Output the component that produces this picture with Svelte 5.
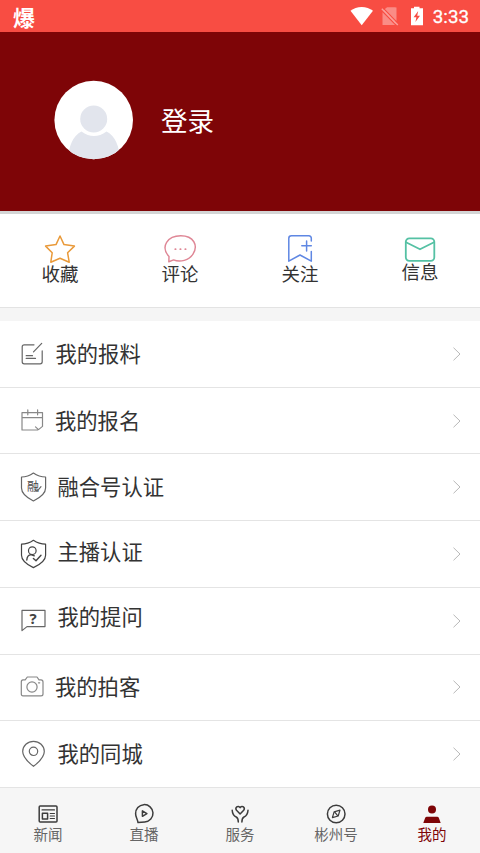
<script>
  const actions = [
    { id: 'fav', label: '收藏', color: '#e99a3a' },
    { id: 'comment', label: '评论', color: '#df8796' },
    { id: 'follow', label: '关注', color: '#5f87e3' },
    { id: 'message', label: '信息', color: '#55c1a4' }
  ];
  const rows = [
    { id: 'report', label: '我的报料', tone: 'narrow' },
    { id: 'signup', label: '我的报名', tone: 'narrower' },
    { id: 'fusion', label: '融合号认证', tone: 'wide' },
    { id: 'anchor', label: '主播认证', tone: 'wide raised' },
    { id: 'question', label: '我的提问', tone: 'wide lifted' },
    { id: 'photo', label: '我的拍客', tone: 'narrower' },
    { id: 'city', label: '我的同城', tone: 'wide' }
  ];
  const tabs = [
    { id: 'news', label: '新闻' },
    { id: 'live', label: '直播' },
    { id: 'service', label: '服务' },
    { id: 'binzhou', label: '彬州号' },
    { id: 'me', label: '我的', active: true }
  ];
</script>

<div class="screen">
  <div class="status">
    <span class="badge">爆</span>
    <div class="signals">
      <svg width="24" height="20" viewBox="0 0 24 20"><path d="M0.5 4.8Q5.2 1 11.7 1T23 4.8L11.7 19.3Z" fill="#fff" /></svg>
      <svg class="sim" width="18" height="20" viewBox="0 0 18 20">
        <path d="M6 1.5H15.5V15L3.2 3.9ZM1.5 6.2L14 19H1.5Z" fill="#fa8c86" />
        <path d="M2 4.5L14.5 18V1.5H6Z" fill="#fa8c86" />
        <path d="M2 1.8L17.2 17.6" stroke="#f84d43" stroke-width="1.2" />
        <path d="M0.8 2.8L16.8 19" stroke="#fba09b" stroke-width="1.4" />
      </svg>
      <svg class="battery" width="14" height="20" viewBox="0 0 14 20">
        <path d="M4 0.7H9.5V2.3H13V19.3H1V2.3H4Z" fill="#fff" />
        <path d="M8.2 5L3.6 11.3H6.4L5.4 16L10 9.7H7.2Z" fill="#f84d43" />
      </svg>
      <span class="clock">3:33</span>
    </div>
  </div>

  <header>
    <svg class="avatar" width="80" height="80" viewBox="0 0 80 80">
      <defs><clipPath id="face"><circle cx="39.7" cy="40" r="39.3" /></clipPath></defs>
      <circle cx="39.7" cy="40" r="39.3" fill="#fff" />
      <g clip-path="url(#face)" fill="#e2e5ed">
        <path d="M14 80Q15 58 27.5 51.5Q40 60.5 52.5 51.5Q65 58 66 80Z" />
        <circle cx="39.7" cy="39" r="13.5" />
      </g>
    </svg>
    <span>登录</span>
  </header>

  <nav class="actions">
    {#each actions as a}
      <div class="action" class:up={a.id === 'message'}>
        <svg width="36" height="30" viewBox="0 0 36 30" fill="none" stroke={a.color} stroke-width="1.5" stroke-linejoin="round" stroke-linecap="round">
          {#if a.id === 'fav'}
            <path d="M18 2L22 10.6L32.4 12.1L25.6 18.8L27.2 28.2L18 24.3L8.8 28.2L10.2 18.8L3.6 12.1L14 10.6Z" />
          {:else if a.id === 'comment'}
            <path d="M6.4 22.6C-3 12.5 5 1.8 18.7 1.8S37.2 11.5 31.5 20.2C27.5 26.2 18 28.7 11.2 25.9L6.2 27.8Z" transform="translate(.9 0) scale(.955 1)" />
            <path d="M13.3 15.2H13.6M18.3 15.2H18.6M23.3 15.2H23.6" stroke-width="1.8" />
          {:else if a.id === 'follow'}
            <path d="M29.3 7V4.3Q29.3 1.8 26.8 1.8H9.5Q6.8 1.8 6.8 4.3V27.2L18 21L29.3 27.2V17.5M19.8 11.8H29.3M24.6 7V17" />
          {:else}
            <g stroke-width="1.8"><rect x="3.8" y="4.3" width="28.5" height="22.5" rx="3.5" /><path d="M4 8.3L18 15.3L32 8.3" /></g>
          {/if}
        </svg>
        <span>{a.label}</span>
      </div>
    {/each}
  </nav>

  <main>
    {#each rows as r}
      <div class="row {r.tone}">
        <svg class="icon" width="28" height="32" viewBox="0 0 28 32" fill="none" stroke="#666" stroke-width="1.2" stroke-linejoin="round" stroke-linecap="round">
          {#if r.id === 'report'}
            <path d="M14 6.8H4.2Q2.2 6.8 2.2 8.8V23.8Q2.2 25.8 4.2 25.8H20.2Q22.2 25.8 22.2 23.8V12.9M13.5 13.9L21.7 5.4M6.2 17.7H12.5M6.2 20.4H15.5" />
          {:else if r.id === 'signup'}
            <path d="M17.5 25H2V7.6H22.5V21.4L18.5 24.6L15.5 21.9M2 12.6H22.5M7.8 4.9V9.8M17.6 4.9V9.8" stroke="#888" />
          {:else if r.id === 'fusion'}
            <path d="M13.4 2Q8 6 1.5 6V17Q1.5 24 13.4 30Q25.6 24 25.6 17V6Q19 6 13.4 2Z" />
            <text x="7" y="19.5" font-size="12" fill="#444" stroke="none">融</text>
            <path d="M14.8 18L17 20.3L21 15.6" />
          {:else if r.id === 'anchor'}
            <g stroke="#444"><path d="M13.4 2.3Q8 6.2 1.5 6.2V17.2Q1.5 24 13.4 29.6Q25.6 24 25.6 17.2V6.2Q19 6.2 13.4 2.3Z" />
              <circle cx="12.3" cy="12.7" r="3.8" /><path d="M6.8 22Q7.2 17 11 16.6L14.3 17.8M13.4 20.5L16 22.8L21 17.3" stroke-width="1.4" /></g>
          {:else if r.id === 'question'}
            <path d="M2 5.4H25V21.6H7L2 25.6Z" /><text class="q" x="9.4" y="18.7">?</text>
          {:else if r.id === 'photo'}
            <g stroke="#888"><path d="M3 8.9H5.2L7.3 6H17L19 8.9H21Q23 8.9 23 11V23Q23 24.9 21 24.9H3Q1.3 24.9 1.3 23V11Q1.3 8.9 3 8.9Z" /><circle cx="12" cy="16" r="5.1" /><path d="M18.5 11.8H19.7" /></g>
          {:else}
            <path d="M13.5 28.3Q2.7 20 2.7 13.5A10.8 10.2 0 0 1 24.3 13.5Q24.3 20 13.5 28.3Z" /><circle cx="13.5" cy="13.3" r="4.2" />
          {/if}
        </svg>
        <span>{r.label}</span>
        <svg class="chevron" width="10" height="16" viewBox="0 0 10 16" fill="none" stroke="#b9b9b9" stroke-width="1"><path d="M1.5 1.7L8 8L1.5 14.3" /></svg>
      </div>
    {/each}
  </main>

  <footer>
    {#each tabs as t}
      <div class="tab" class:active={t.active}>
        <svg width="24" height="22" viewBox="0 0 24 22" fill="none" stroke="#3c3c3c" stroke-width="1.5" stroke-linejoin="round" stroke-linecap="round">
          {#if t.id === 'news'}
            <rect x="3.2" y="3" width="17.8" height="16" rx="1" /><path d="M6 6.9H18.5M14.2 10.5H18.5M14.2 13H18.5M14.2 15.5H18.5" stroke-width="1.1" /><rect x="6.4" y="10.3" width="5.2" height="5.6" />
          {:else if t.id === 'live'}
            <path d="M6 19.5C5.2 15.2 3.6 13.9 3.6 10.8A8.7 8.7 0 1 1 12.8 19Z" /><path d="M10.4 7.9V13.3L14.9 10.6Z" />
          {:else if t.id === 'service'}
            <path d="M12.1 11L8.5 7.3C6.6 4.4 10 1.8 12.1 4.6C14.2 1.8 17.6 4.4 15.7 7.3Z" />
            <path d="M4.2 7.2Q4.5 12.3 8.2 14Q10.3 15 10.3 19M20 7.2Q19.7 12.3 16 14Q13.9 15 13.9 19" />
          {:else if t.id === 'binzhou'}
            <circle cx="12.2" cy="11" r="8.8" /><path d="M8.4 14.7L10.1 8.9L16 7.1L14.2 13ZM11.2 9.7L13.2 12.2" stroke-width="1.2" />
          {:else}
            <circle cx="12" cy="6.4" r="4" fill="#7e0507" stroke="none" /><path d="M3.3 20L5.2 14.8Q5.7 13.7 6.8 13.7H17.2Q18.3 13.7 18.8 14.8L20.7 20Z" fill="#7e0507" stroke="none" />
          {/if}
        </svg>
        <span>{t.label}</span>
      </div>
    {/each}
  </footer>
</div>

<style>
  .screen {
    width: 480px;
    height: 853px;
    display: flex;
    flex-direction: column;
    overflow: hidden;
    background: #fff;
    color: #333;
    font-family: "Noto Sans CJK SC", sans-serif;
  }
  svg { display: block; flex: none; }
  span { white-space: nowrap; }
  .status {
    height: 32px;
    flex: none;
    box-sizing: border-box;
    display: flex;
    align-items: center;
    justify-content: space-between;
    padding: 0 11px 0 13px;
    background: #f84d43;
    color: #fff;
  }
  .badge { font-size: 22px; line-height: 32px; font-weight: 700; }
  .signals { display: flex; align-items: center; }
  .sim { margin-left: 7px; }
  .battery { margin-left: 11px; }
  .clock { margin-left: 9px; font: 400 18.8px/32px Roboto, sans-serif; -webkit-text-stroke: 0.3px #fff; padding-top: 2px; }
  header {
    height: 179px;
    flex: none;
    box-sizing: border-box;
    display: flex;
    align-items: center;
    padding: 0 0 3px 54px;
    background: #7e0507;
    color: #fff;
    font-size: 26.5px;
  }
  header span { margin-left: 27px; padding-bottom: 1px; }
  .actions {
    height: 97px;
    flex: none;
    box-sizing: border-box;
    display: flex;
    border-top: 3px solid #d3d5d5;
    border-bottom: 1px solid #e3e3e3;
  }
  .action {
    flex: 1;
    display: flex;
    flex-direction: column;
    align-items: center;
    padding-top: 20px;
    font-size: 18.5px;
    line-height: 22px;
  }
  .action span { margin-top: -2px; }
  .action.up span { margin-top: -4px; }
  main {
    height: 480px;
    flex: none;
    box-sizing: border-box;
    display: flex;
    flex-direction: column;
    border-top: 13px solid #f5f5f5;
  }
  .row {
    flex: 1;
    display: flex;
    align-items: center;
    padding: 0 18px 0 20px;
    border-bottom: 1px solid #e4e4e4;
    font-size: 21.3px;
    line-height: 32px;
  }
  .row span { padding-bottom: 2px; }
  .narrow span { margin-left: 7.5px; }
  .narrower span { margin-left: 7px; }
  .wide span { margin-left: 9.5px; }
  .row.raised span { padding-bottom: 6px; }
  .row.lifted span { padding-bottom: 9px; }
  .chevron { margin-left: auto; }
  .q { font: 700 15px "Noto Sans", sans-serif; fill: #444; stroke: none; }
  footer {
    flex: 1;
    display: flex;
    background: #f6f6f6;
    color: #666;
    font-size: 14.5px;
    line-height: 20px;
  }
  .tab {
    flex: 1;
    display: flex;
    flex-direction: column;
    align-items: center;
    padding-top: 15px;
  }
  .tab span { margin-top: -1px; }
  .active { color: #7e0507; }
</style>
